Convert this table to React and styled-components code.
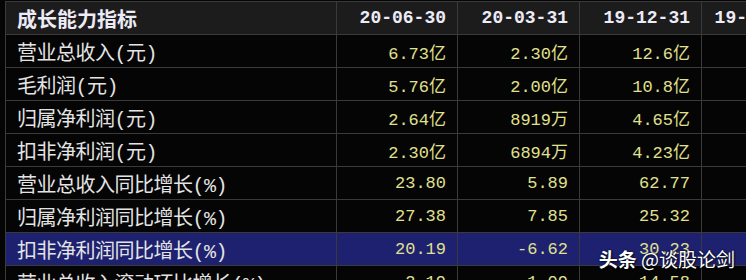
import React from "react";
import styled, { createGlobalStyle } from "styled-components";

const GlobalStyle = createGlobalStyle`
  html, body {
    margin: 0;
    padding: 0;
    background: #050505;
    overflow: hidden;
  }
`;

const columns = [
  { date: "20-06-30", w: 121 },
  { date: "20-03-31", w: 122 },
  { date: "19-12-31", w: 122 },
  { date: "19-09-30", w: 111 },
];

const rows = [
  { name: "营业总收入(元)", values: ["6.73亿", "2.30亿", "12.6亿"] },
  { name: "毛利润(元)", values: ["5.76亿", "2.00亿", "10.8亿"] },
  { name: "归属净利润(元)", values: ["2.64亿", "8919万", "4.65亿"] },
  { name: "扣非净利润(元)", values: ["2.30亿", "6894万", "4.23亿"] },
  { name: "营业总收入同比增长(%)", values: ["23.80", "5.89", "62.77"] },
  { name: "归属净利润同比增长(%)", values: ["27.38", "7.85", "25.32"] },
  { name: "扣非净利润同比增长(%)", values: ["20.19", "-6.62", "30.23"], active: true },
  { name: "营业总收入滚动环比增长(%)", values: ["2.19", "1.09", "14.58"] },
];

function App() {
  return (
    <Page>
      <GlobalStyle />
      <Table>
        <Row $head>
          <LabelCell $head>成长能力指标</LabelCell>
          {columns.map((c) => (
            <Cell key={c.date} $head $w={c.w}>
              {c.date}
            </Cell>
          ))}
        </Row>
        {rows.map((r) => (
          <Row key={r.name} $active={r.active}>
            <LabelCell>{r.name}</LabelCell>
            {columns.map((c, i) => (
              <Cell key={c.date} $w={c.w}>
                {r.values[i] || ""}
              </Cell>
            ))}
          </Row>
        ))}
      </Table>
      <Watermark>
        <b>头条</b> @谈股论剑
      </Watermark>
    </Page>
  );
}

export default App;

const Page = styled.div`
  position: relative;
  width: 746px;
  height: 280px;
  overflow: hidden;
  background: #050505;
`;

const Table = styled.div`
  margin: 1px 0 0 5px;
  border-top: 1px solid #3a3a3a;
  border-left: 1px solid #3a3a3a;
  width: 900px;
`;

const Row = styled.div`
  display: flex;
  height: 33px;
  background: ${(p) => (p.$head ? "#1d1c1d" : p.$active ? "#1d2170" : "transparent")};
`;

const LabelCell = styled.div`
  box-sizing: border-box;
  width: 331px;
  flex: none;
  display: flex;
  align-items: center;
  padding-left: 11px;
  border-right: 1px solid #3a3a3a;
  border-bottom: 1px solid #3a3a3a;
  font-family: "Liberation Mono", "Noto Sans CJK SC", monospace;
  font-size: 20px;
  font-weight: ${(p) => (p.$head ? 700 : 400)};
  color: ${(p) => (p.$head ? "#ecebf6" : "#e4e4e4")};
  letter-spacing: ${(p) => (p.$head ? "0" : "-0.5px")};
  white-space: nowrap;
`;

const Cell = styled.div`
  box-sizing: border-box;
  width: ${(p) => p.$w}px;
  flex: none;
  display: flex;
  align-items: center;
  justify-content: flex-end;
  padding-right: 11px;
  border-right: 1px solid #3a3a3a;
  border-bottom: 1px solid #3a3a3a;
  font-family: "Liberation Mono", "Noto Sans CJK SC", monospace;
  font-size: ${(p) => (p.$head ? "18px" : "17px")};
  font-weight: ${(p) => (p.$head ? 700 : 400)};
  color: ${(p) => (p.$head ? "#ecebf6" : "#e0e08e")};
  white-space: nowrap;
`;

const Watermark = styled.div`
  position: absolute;
  right: 11px;
  top: 245px;
  font-family: "Noto Sans CJK SC", sans-serif;
  font-size: 19px;
  color: #ffffff;
  text-shadow: 0 0 2px rgba(0, 0, 0, 0.8), 1px 1px 2px rgba(0, 0, 0, 0.7);
  white-space: nowrap;
  b {
    font-weight: 700;
  }
`;
